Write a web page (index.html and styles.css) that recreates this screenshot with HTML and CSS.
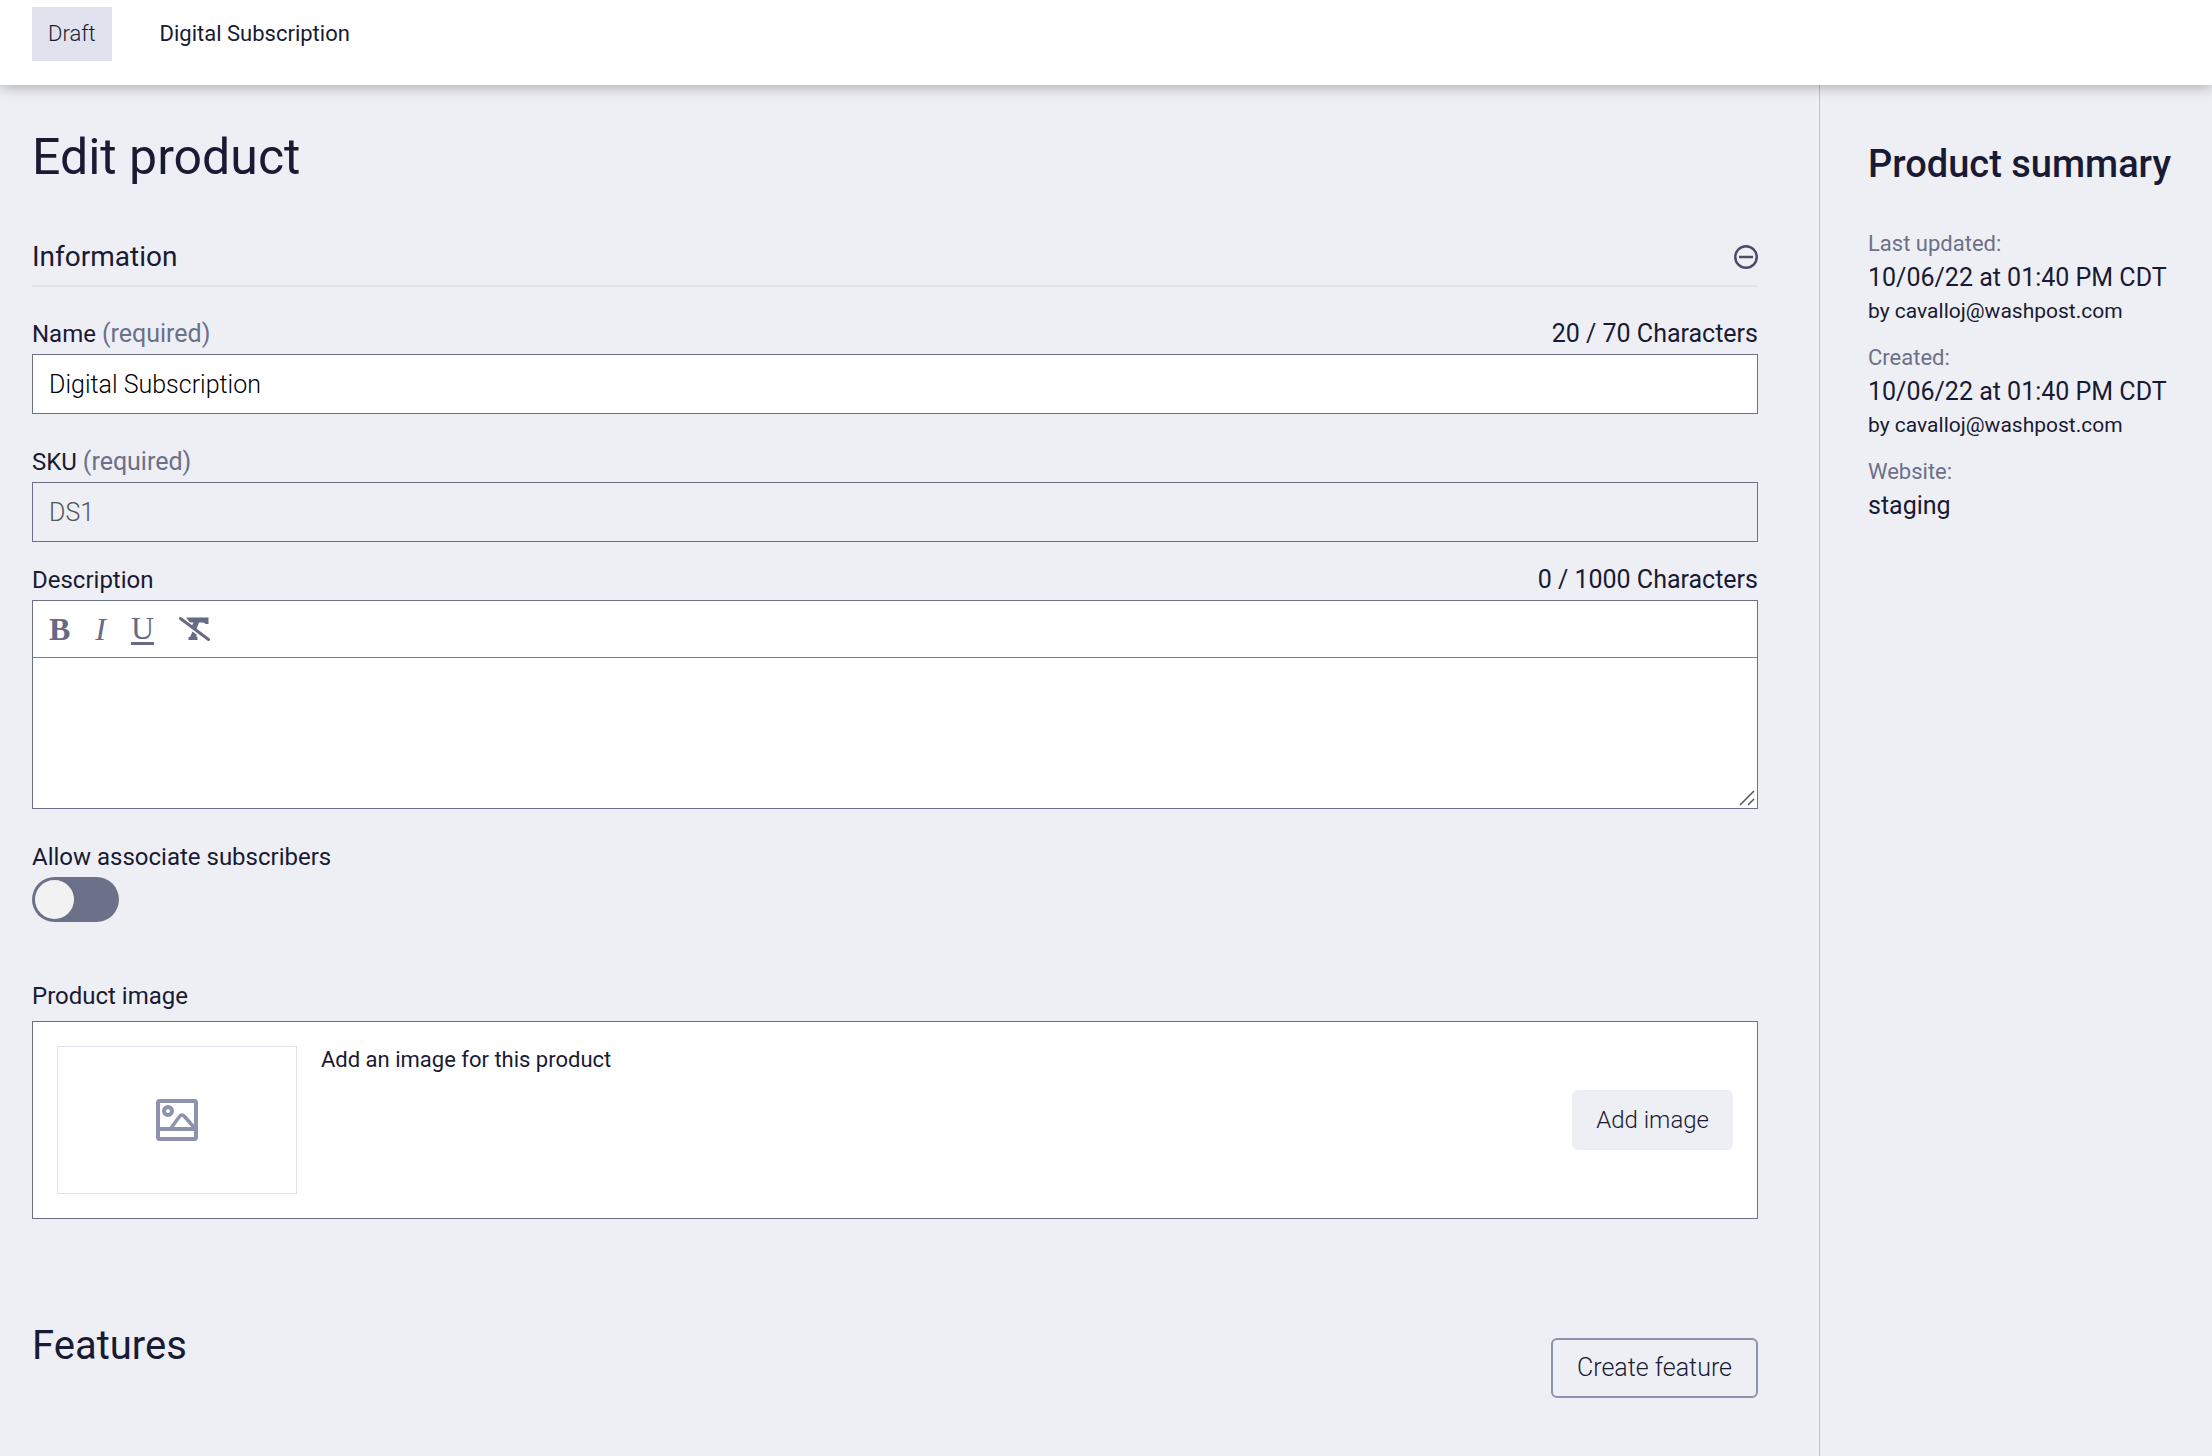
FILE: index.html
```
<!DOCTYPE html>
<html lang="en">
	<head>
		<meta charset="UTF-8" />
		<meta name="viewport" content="width=device-width, initial-scale=1.0" />
		<title>Edit product</title>
		<link rel="stylesheet" href="styles.css">
	</head>
	<body>
		<header class="topbar">
			<span class="status">Draft</span>
			<span class="product-name">Digital Subscription</span>
		</header>
		<div class="layout">
			<main class="content">
				<h1>Edit product</h1>
				<div class="section-head">
					<h2>Information</h2>
					<button class="collapse" type="button" aria-label="Collapse information">
						<svg width="24" height="24" viewBox="0 0 24 24" fill="none" stroke="currentColor">
							<circle cx="12" cy="12" r="10.75" stroke-width="2.5" />
							<path d="M5 12h14" stroke-width="2.5" />
						</svg>
					</button>
				</div>

				<div class="field field-name">
					<div class="label-row">
						<label for="name">Name <span class="required">(required)</span></label>
						<span class="counter">20 / 70 Characters</span>
					</div>
					<input class="text-input" type="text" id="name" value="Digital Subscription" />
				</div>

				<div class="field">
					<div class="label-row">
						<label for="sku">SKU <span class="required">(required)</span></label>
					</div>
					<input class="text-input" type="text" id="sku" value="DS1" disabled />
				</div>

				<div class="field field-description">
					<div class="label-row">
						<label for="description">Description</label>
						<span class="counter">0 / 1000 Characters</span>
					</div>
					<div class="editor">
						<div class="toolbar">
							<button class="tool bold" type="button" aria-label="Bold">B</button>
							<button class="tool italic" type="button" aria-label="Italic">I</button>
							<button class="tool underline" type="button" aria-label="Underline">U</button>
							<button class="tool clear" type="button" aria-label="Clear formatting">
								<svg width="31" height="26" viewBox="1 0 31 26" fill="currentColor">
									<path d="M8 1.500h22.500v6.500h-3q-.5-1.500-2.500-1.500h-4l-2.500 6.500-4.500-3.500 1.500-3h-3.500z" />
									<path d="M14.500 15.500l4 3v2.500h1v3h-9v-3h1.500z" />
									<path d="M2.500 2.500l28 21" stroke="currentColor" stroke-width="3" stroke-linecap="round" />
								</svg>
							</button>
						</div>
						<textarea id="description"></textarea>
						<svg class="resizer" width="16" height="16" viewBox="0 0 16 16" fill="none" stroke="#555" stroke-width="1.500">
							<path d="M1 15L15 1M9 15l6-6" />
						</svg>
					</div>
				</div>

				<div class="field">
					<div class="label-row">
						<label for="associates">Allow associate subscribers</label>
					</div>
					<input class="toggle" type="checkbox" id="associates" />
				</div>

				<div class="field field-image">
					<div class="label-row">Product image</div>
					<div class="image-card">
						<div class="thumb">
							<svg width="42" height="42" viewBox="0 0 42 42" fill="none" stroke="currentColor" stroke-width="4">
								<rect x="2" y="2" width="38" height="38" rx="1.500" />
								<circle cx="12" cy="12" r="4" />
								<path d="M2 30h38" />
								<path d="M15 29l8.500-11.500q2.500-3 5 0L39 29.500" stroke-width="3.500" />
							</svg>
						</div>
						<p>Add an image for this product</p>
						<button class="btn btn-soft" type="button">Add image</button>
					</div>
				</div>

				<div class="features">
					<h2>Features</h2>
					<button class="btn btn-outline" type="button">Create feature</button>
				</div>
			</main>

			<aside class="summary">
				<h2>Product summary</h2>
				<dl>
					<div class="entry">
						<dt>Last updated:</dt>
						<dd>10/06/22 at 01:40 PM CDT</dd>
						<dd class="author">by cavalloj@washpost.com</dd>
					</div>
					<div class="entry">
						<dt>Created:</dt>
						<dd>10/06/22 at 01:40 PM CDT</dd>
						<dd class="author">by cavalloj@washpost.com</dd>
					</div>
					<div class="entry">
						<dt>Website:</dt>
						<dd>staging</dd>
					</div>
				</dl>
			</aside>
		</div>
	</body>
</html>
```

FILE: styles.css
```
* {
	margin: 0;
	padding: 0;
	box-sizing: border-box;
}
body {
	display: flex;
	flex-direction: column;
	min-height: 100vh;
	font-family: Roboto, sans-serif;
	font-size: 24px;
	line-height: 28px;
	color: #191a33;
	background-color: #eeeff5;
}
button,
input,
textarea {
	font: inherit;
	color: inherit;
}
h1,
h2 {
	font-weight: normal;
}

/* Top bar */
.topbar {
	position: relative;
	z-index: 1;
	display: flex;
	gap: 48px;
	padding: 7px 32px 24px;
	font-size: 22px;
	line-height: 54px;
	background-color: #fff;
	box-shadow: 0 3px 12px rgba(0, 0, 0, 0.25);
}
.status {
	padding: 0 16px;
	font-weight: 300;
	background-color: #e0e2ed;
}

.layout {
	flex: 1;
	display: flex;
}
.content {
	flex: 1;
	padding: 44px 61px 56px 32px;
}
h1 {
	margin-bottom: 54px;
	font-size: 50px;
	line-height: 56px;
}
.section-head {
	display: flex;
	justify-content: space-between;
	align-items: center;
	padding-bottom: 10px;
	border-bottom: 2px solid #e0e2ed;
}
.section-head h2 {
	font-size: 28px;
	line-height: 36px;
}
.collapse {
	display: flex;
	border: none;
	background: none;
	color: #484c66;
}

/* Form fields */
.field {
	margin-top: 34px;
}
.field-name {
	margin-top: 33px;
}
.field-description {
	margin-top: 24px;
}
.field-image {
	margin-top: 60px;
}
.label-row {
	display: flex;
	justify-content: space-between;
	margin-bottom: 6px;
}
.field-image .label-row {
	margin-bottom: 11px;
}
.required,
.counter {
	font-size: 25px;
}
.required {
	color: #6c7088;
}
.text-input {
	display: block;
	width: 100%;
	height: 60px;
	padding: 0 16px;
	border: 1px solid #6c7088;
	background-color: #fff;
	color: #000;
	font-size: 25px;
	font-weight: 300;
}
.text-input:disabled {
	background-color: #eeeff5;
	color: #545454;
}

.editor {
	position: relative;
	border: 1px solid #6c7088;
	background-color: #fff;
}
.toolbar {
	display: flex;
	align-items: center;
	height: 57px;
	padding: 0 16px;
	gap: 25px;
	border-bottom: 1px solid #808080;
}
.tool {
	border: none;
	background: none;
	color: #666b85;
	font-family: "Liberation Serif", serif;
	font-size: 32px;
	line-height: 36px;
}
.bold {
	font-weight: bold;
}
.italic {
	font-style: italic;
}
.underline {
	line-height: 28px;
	border-bottom: 3px solid #666b85;
}
.clear {
	display: flex;
}
textarea {
	display: block;
	width: 100%;
	height: 150px;
	padding: 16px;
	border: none;
	background: none;
	resize: none;
}
.resizer {
	position: absolute;
	right: 2px;
	bottom: 2px;
}

.toggle {
	appearance: none;
	display: block;
	width: 87px;
	height: 45px;
	padding: 3px;
	border-radius: 24px;
	background-color: #6c7088;
}
.toggle::before {
	content: "";
	display: block;
	width: 39px;
	height: 39px;
	border-radius: 50%;
	background-color: #f2f2f2;
}
.toggle:checked::before {
	margin-left: auto;
}

.image-card {
	display: flex;
	align-items: center;
	gap: 24px;
	padding: 24px;
	border: 1px solid #6c7088;
	background-color: #fff;
}
.thumb {
	display: flex;
	justify-content: center;
	align-items: center;
	width: 240px;
	height: 148px;
	border: 1px solid #e0e2ed;
	color: #8e93ad;
}
.image-card p {
	flex: 1;
	align-self: flex-start;
	font-size: 22px;
}
.btn {
	height: 60px;
	padding: 0 24px;
	border: none;
	border-radius: 6px;
	font-weight: 300;
	background: none;
}
.btn-soft {
	background-color: #eeeff5;
}
.btn-outline {
	border: 2px solid #8e93ad;
	font-size: 25px;
}

.features {
	display: flex;
	justify-content: space-between;
	align-items: flex-end;
	min-height: 76px;
	margin-top: 103px;
}
.features h2 {
	align-self: flex-start;
	font-size: 40px;
	line-height: 48px;
}

/* Sidebar */
.summary {
	flex: 0 0 393px;
	padding: 55px 24px 48px 48px;
	border-left: 1px solid #bfc1d4;
	white-space: nowrap;
}
.summary h2 {
	margin-bottom: 40px;
	font-size: 38px;
	font-weight: 500;
	line-height: 48px;
}
.entry {
	margin-bottom: 16px;
}
dt {
	font-size: 22px;
	line-height: 32px;
	color: #6c7088;
}
dd {
	font-size: 25px;
	line-height: 36px;
}
.author {
	font-size: 21px;
	line-height: 30px;
}
```
